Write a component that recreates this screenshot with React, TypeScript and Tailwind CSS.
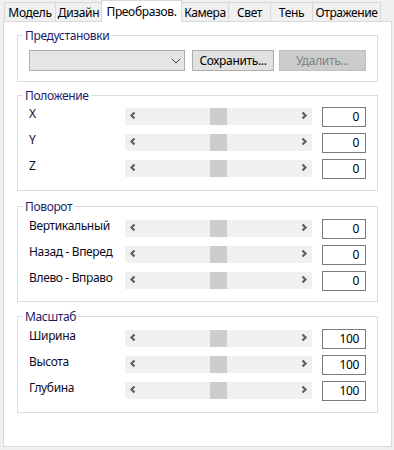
import React from "react";

const tabs = [
  { label: "Модель", w: "w-[52px]" },
  { label: "Дизайн", w: "w-[47px]" },
  { label: "Преобразов.", w: "w-[81px]", active: true },
  { label: "Камера", w: "w-[48px]" },
  { label: "Свет", w: "w-[43px]" },
  { label: "Тень", w: "w-[43px]" },
  { label: "Отражение", w: "w-[69px]" },
];

function ScrollBar() {
  return (
    <div className="mt-[1px] flex h-[17px] w-[187px] bg-[#f0f0f0]">
      <div className="h-[17px] w-[17px]">
        <svg width="17" height="17" viewBox="0 0 17 17">
          <polyline points="9.5,4.5 6.5,7.5 9.5,10.5" fill="none" stroke="#606060" strokeWidth="2.2" />
        </svg>
      </div>
      <div className="flex flex-1 justify-center">
        <div className="h-[17px] w-[17px] bg-[#cdcdcd]" />
      </div>
      <div className="h-[17px] w-[17px]">
        <svg width="17" height="17" viewBox="0 0 17 17">
          <polyline points="7.5,4.5 10.5,7.5 7.5,10.5" fill="none" stroke="#606060" strokeWidth="2.2" />
        </svg>
      </div>
    </div>
  );
}

function Row({ label, value }: { label: string; value: string }) {
  return (
    <div className="flex h-[20px] items-start">
      <div className="ml-[11px] mt-[-1px] w-[96px] text-[12px] leading-[16px] text-[#0c0c24]">{label}</div>
      <ScrollBar />
      <div className="ml-[10px] flex h-[20px] w-[44px] items-center justify-end border border-[#7a7a7a] bg-white pr-[6px] text-[12px] leading-[16px] text-black">
        {value}
      </div>
    </div>
  );
}

function Group({
  title,
  className,
  children,
}: {
  title: string;
  className: string;
  children: React.ReactNode;
}) {
  return (
    <div className={`flex w-[361px] flex-col border border-[#dcdcdc] ${className}`}>
      <div className="-mb-[8px] -mt-[8px] ml-[5px] h-[16px] w-fit bg-white px-[2px] text-[12px] leading-[16px] text-[#1c1c6a]">
        {title}
      </div>
      {children}
    </div>
  );
}

export default function App() {
  return (
    <div className="h-[450px] w-[394px] bg-[#f0f0f0] font-['Noto_Sans',sans-serif] tracking-[-0.35px]">
      <div className="flex h-[21px] items-start pl-[4px]">
        {tabs.map((t, i) =>
          t.active ? (
            <div
              key={t.label}
              className={`relative z-10 -ml-px flex h-[22px] ${t.w} items-start justify-center border-x border-t border-[#d9d9d9] bg-white pt-[3px] text-[12px] leading-[16px] text-black`}
            >
              {t.label}
            </div>
          ) : (
            <div
              key={t.label}
              className={`${i === 0 ? "" : "-ml-px"} mt-[2px] flex h-[19px] ${t.w} items-start justify-center border-x border-t border-[#d9d9d9] bg-[#f0f0f0] pt-[2px] text-[12px] leading-[16px] text-black`}
            >
              {t.label}
            </div>
          )
        )}
      </div>
      <div className="ml-[3px] flex h-[426px] w-[389px] flex-col border border-[#d9d9d9] bg-white pl-[13px] pt-[13px]">
        <Group title="Предустановки" className="h-[47px]">
          <div className="ml-[11px] mt-[14px] flex h-[21px] items-start">
            <div className="flex h-[21px] w-[156px] items-center justify-end border border-[#adadad] bg-[#e5e5e5] pr-[3px]">
              <svg width="10" height="6" viewBox="0 0 10 6">
                <polyline points="1,1 5,5 9,1" fill="none" stroke="#404040" strokeWidth="1" />
              </svg>
            </div>
            <div className="ml-[7px] flex h-[21px] w-[82px] items-center justify-center border border-[#adadad] bg-[#e1e1e1] text-[12px] leading-[16px] text-black">
              Сохранить...
            </div>
            <div className="ml-[5px] flex h-[21px] w-[87px] items-center justify-center border border-[#bfbfbf] bg-[#cccccc] text-[12px] leading-[16px] text-[#838383]">
              Удалить...
            </div>
          </div>
        </Group>
        <Group title="Положение" className="mt-[13px] h-[96px]">
          <div className="mt-[11px] flex flex-col gap-[6px]">
            <Row label="X" value="0" />
            <Row label="Y" value="0" />
            <Row label="Z" value="0" />
          </div>
        </Group>
        <Group title="Поворот" className="mt-[15px] h-[96px]">
          <div className="mt-[12px] flex flex-col gap-[6px]">
            <Row label="Вертикальный" value="0" />
            <Row label="Назад - Вперед" value="0" />
            <Row label="Влево - Вправо" value="0" />
          </div>
        </Group>
        <Group title="Масштаб" className="mt-[14px] h-[97px]">
          <div className="mt-[12px] flex flex-col gap-[6px]">
            <Row label="Ширина" value="100" />
            <Row label="Высота" value="100" />
            <Row label="Глубина" value="100" />
          </div>
        </Group>
      </div>
    </div>
  );
}
